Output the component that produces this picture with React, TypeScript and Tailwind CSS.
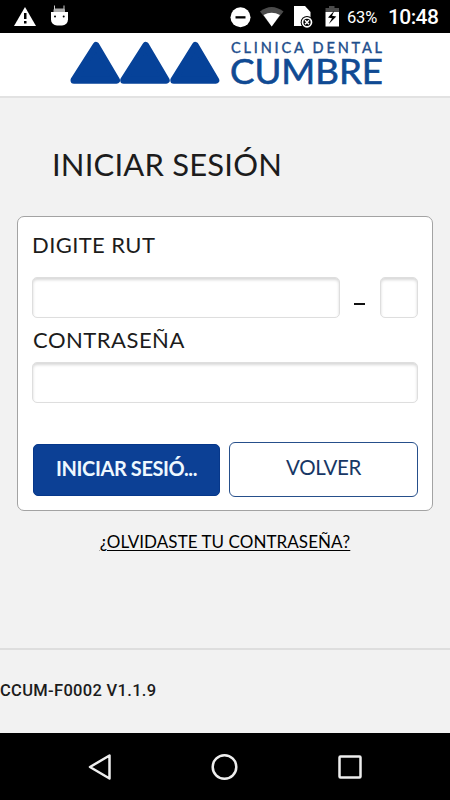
const font = "font-[Lato,'Liberation_Sans',sans-serif]";
const field =
  "h-[41px] rounded-[5px] border border-[#dedede] bg-white shadow-[inset_0_2px_3px_#d8d8d8] outline-none";

function StatusBar() {
  return (
    <div className="flex h-[33px] shrink-0 justify-between bg-black font-[Roboto,sans-serif] text-white">
      <svg width="80" height="33" viewBox="0 0 80 33">
        <path d="M25 7 L36 26 H14Z" fill="#fff" />
        <path d="M24 13h2.5v6H24zM24 21h2.5v2.5H24z" fill="#000" />
        <path d="M51 12h17v7.5a6 6 0 0 1-6 6h-5a6 6 0 0 1-6-6z" fill="#fff" />
        <path d="M53.500 12V10q0-1.500 1.500-1.500h8.500q1.500 0 1.500 1.500v2z" fill="#aaa" />
        <path d="M54.5 5.5v4M64 5.5v4" stroke="#ccc" strokeWidth="1" />
        <circle cx="55" cy="16.5" r="1" fill="#000" />
        <circle cx="63.7" cy="16.5" r="1" fill="#000" />
      </svg>
      <div className="flex">
        <svg width="117" height="33" viewBox="225 0 117 33">
          <circle cx="240.5" cy="17.3" r="10" fill="#fff" />
          <path d="M235.5 16.2h10v2.3h-10z" fill="#000" />
          <path d="M260 11.500Q271.500 2.500 283.500 11.500L271.700 26.500Z" fill="#4b4b4b" />
          <path d="M263.500 15Q271.500 10.500 280 15L271.700 26.500Z" fill="#fff" />
          <path d="M294 6h11l5.500 6v14H294z" fill="#fff" />
          <circle cx="307" cy="22.300" r="6.300" fill="#000" />
          <circle cx="307" cy="22.300" r="4.500" fill="none" stroke="#fff" strokeWidth="1.700" />
          <path d="m305 20.300 4 4m0-4-4 4" stroke="#fff" strokeWidth="1.500" />
          <path d="M325.500 8h3.500V6h5.500v2h4.500v4h-13.500z" fill="#4b4b4b" />
          <path d="M325.500 12h13.500v14.500h-13.500z" fill="#fff" />
          <path d="M334.500 10.500 328 17.500l4 .8-3.200 5.700 7.500-7.500-4.300-.7z" fill="#000" />
        </svg>
        <span className="w-[46px] pl-[5px] pt-[8px] text-[16.5px] leading-[19px] tracking-[-0.2px]">63%</span>
        <span className="w-[62px] pt-[6px] text-[21px] font-medium leading-[23px] tracking-[-0.6px]">10:48</span>
      </div>
    </div>
  );
}

function Logo() {
  return (
    <svg width="450" height="63" viewBox="0 33 450 63" className={font}>
      <g fill="#064299" stroke="#064299" strokeWidth="7" strokeLinejoin="round">
        <path d="M96 45.500 116.500 80.200H74Z" />
        <path d="M145.700 45.500 166.200 80.200H123.700Z" />
        <path d="M195.300 45.500 215.800 80.200H173.800Z" />
      </g>
      <text x="231" y="52.500" fontSize="14.500" fontWeight="400" stroke="#1d4e8c" strokeWidth="0.400" textLength="151" fill="#1d4e8c">CLINICA DENTAL</text>
      <text x="230" y="83.500" fontSize="34" fontWeight="400" stroke="#104a93" strokeWidth="0.600" textLength="153" lengthAdjust="spacingAndGlyphs" fill="#104a93">CUMBRE</text>
    </svg>
  );
}

export default function App() {
  return (
    <div className={`flex h-[800px] w-[450px] flex-col overflow-hidden bg-[#f2f2f2] text-[#1c1c1c] ${font}`}>
      <StatusBar />
      <header className="h-[65px] shrink-0 border-b-2 border-[#e2e2e2] bg-white">
        <Logo />
      </header>
      <main className="flex h-[550px] shrink-0 flex-col px-[17px]">
        <h1 className="mt-[47px] mb-px pl-[35px] text-[31px] leading-[38px] tracking-[0.18px] whitespace-nowrap">INICIAR SESIÓN</h1>
        <section className="mt-[32px] flex h-[295px] flex-col rounded-[7px] border border-[#a3a3a3] bg-white pl-[14px] pr-[14px] pt-[15px]">
          <label className="h-[45px] pt-[1px] text-[22px] leading-[24px] tracking-[0.4px]">DIGITE RUT</label>
          <div className="flex">
            <input className={`${field} w-[308px]`} />
            <span className="mt-[26px] ml-[14px] mr-[15px] h-[2px] w-[11px] bg-[#111]" />
            <input className={`${field} w-[38px]`} />
          </div>
          <label className="h-[44px] pt-[10px] pl-px text-[22px] leading-[24px] tracking-[0.5px]">CONTRASEÑA</label>
          <input className={`${field} w-[386px]`} />
          <div className="mt-[39px] flex items-center gap-[9px]">
            <button className="ml-px h-[52px] w-[187px] rounded-[5px] border border-[#06378a] bg-[#0c4095] pb-[3px] text-[20px] font-bold tracking-[-0.4px] text-[#eef8ff]">INICIAR SESIÓ...</button>
            <button className="h-[55px] w-[189px] rounded-[6px] border border-[#264f8b] bg-white pb-[4px] text-[20.5px] tracking-[-0.4px] text-[#173765]">VOLVER</button>
          </div>
        </section>
        <a className="mt-[20px] self-center text-[17px] leading-[22px] tracking-[0.06px] text-black underline underline-offset-2 whitespace-nowrap">¿OLVIDASTE TU CONTRASEÑA?</a>
      </main>
      <footer className="h-[85px] shrink-0 border-t-2 border-[#dedede] pt-[31px] font-[Roboto,sans-serif] text-[16.500px] font-medium leading-[20px] tracking-[0.32px]">CCUM-F0002 V1.1.9</footer>
      <nav className="h-[67px] shrink-0 bg-black">
        <svg width="450" height="67" viewBox="0 733 450 67" fill="none" stroke="#eee" strokeWidth="2.500" strokeLinejoin="round">
          <path d="M109.500 755.500v23L90 767Z" />
          <circle cx="224.500" cy="767" r="11.800" />
          <rect x="339.500" y="756.500" width="21" height="21" rx="1" />
        </svg>
      </nav>
    </div>
  );
}
